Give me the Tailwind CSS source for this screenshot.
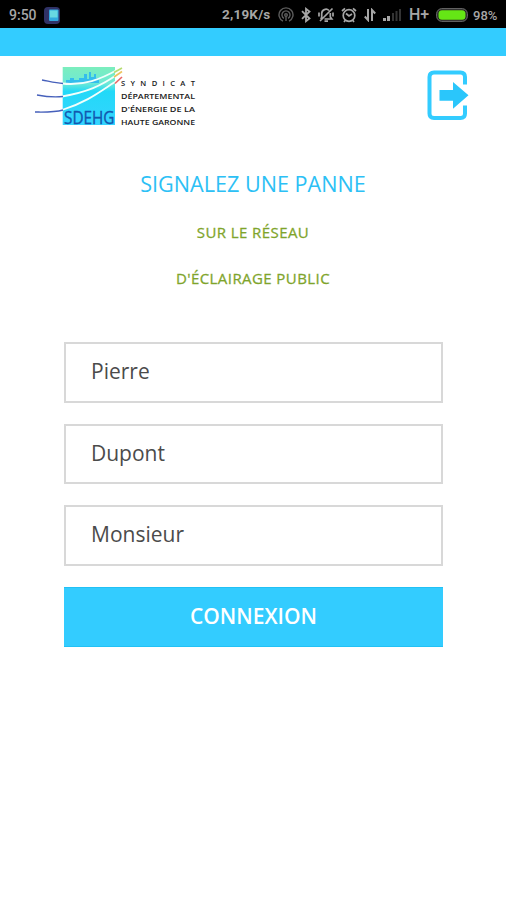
<!DOCTYPE html>
<html lang="fr">
<head>
<meta charset="utf-8">
<title>SDEHG - Signalez une panne</title>
<script src="https://cdn.jsdelivr.net/npm/@tailwindcss/browser@4"></script>
</head>
<body class="w-[506px] h-[900px] overflow-hidden bg-white font-['Open_Sans','Noto_Sans',sans-serif]">
<div class="h-7 bg-black flex items-center pl-[9px] pt-[2px] font-[Roboto,sans-serif] font-medium text-[#a6a6a6] leading-none">
  <span class="w-[35px] text-[14px]">9:50</span>
  <svg class="w-4 h-[17px]" viewBox="0 0 16 17"><rect width="16" height="17" rx="4" fill="#303266"/><rect x="5" y="2.500" width="9.500" height="11.500" rx="1" fill="#32a9df"/><rect x="6" y="3.500" width="7.500" height="7" fill="#68d8e2"/></svg>
  <span class="ml-[162px] w-[56px] text-[13.5px] font-bold tracking-[0.2px] whitespace-nowrap">2,19K/s</span>
  <svg class="w-4 h-4" viewBox="0 0 16 16" fill="none" stroke="#5c5c5c" stroke-width="1.4"><path d="M5 14.2A7 7 0 1 1 11 14.2M6 11.3A4 4 0 1 1 10 11.3"/><circle cx="8" cy="8" r="1.3"/><path d="M8 9v5"/></svg>
  <svg class="ml-[7px] w-[10px] h-4" viewBox="0 0 10 16" fill="none" stroke="#a6a6a6" stroke-width="1.8"><path d="M1 4.2 8.5 11.5 5 14.2V1.8L8.5 4.5 1 11.8"/></svg>
  <svg class="ml-[7px] w-4 h-4" viewBox="0 0 16 16" fill="none" stroke="#a6a6a6" stroke-width="1.7"><path d="M3.700 10.500 2.800 12M3.700 10.500V6.500a4.300 4.300 0 0 1 7.300-3M12.300 6v4l1.500 2H6.500M6.500 14.200h3.500M2 14 14.500 1.500M1 9.500V5.500M15 5.500v4"/></svg>
  <svg class="ml-[7px] w-4 h-4" viewBox="0 0 16 16" fill="none" stroke="#a6a6a6" stroke-width="1.7"><circle cx="8" cy="8.5" r="5.8"/><path d="M5 6.500 8 9l3-2M1 4l3-2.600M15 4l-3-2.600M3 15l1.500-2M13 15l-1.500-2"/></svg>
  <svg class="ml-[7px] w-3 h-[14px]" viewBox="0 0 12 14" fill="none" stroke="#a6a6a6" stroke-width="2"><path d="M4 1v11L.8 8.500M8 13V2l3.200 3.500"/></svg>
  <svg class="ml-[7px] w-5 h-[14px]" viewBox="0 0 20 14"><path d="M0 10h3v3H0zM4 8h3v5H4z" fill="#a6a6a6"/><path d="M9 5h2v8H9zM12.500 3h2v10h-2zM16 1h2v12h-2z" fill="#343434"/></svg>
  <span class="ml-[6px] w-[22px] text-[16px] whitespace-nowrap">H+</span>
  <svg class="ml-[5px] w-8 h-[14px]" viewBox="0 0 32 14"><rect x=".7" y=".7" width="30.600" height="12.600" rx="5" fill="#222" stroke="#777"/><rect x="2.500" y="2.300" width="27" height="9.400" rx="3.500" fill="#65e615"/></svg>
  <span class="ml-[5px] text-[13px]">98%</span>
</div>
<div class="h-7 bg-[#33ccff]"></div>
<header class="h-[84px] pl-[30px] pr-[34px] pt-[4px] flex justify-between">
  <svg class="w-[170px] h-[70px]" viewBox="30 60 170 70">
    <defs><linearGradient id="sky" x1="0" x2="0" y1="0" y2="1"><stop offset="0" stop-color="#7ceebd"/><stop offset=".28" stop-color="#6ee9d5"/><stop offset=".42" stop-color="#22d9f8"/><stop offset="1" stop-color="#35d4ff"/></linearGradient></defs>
    <rect x="62.700" y="67" width="52.300" height="58" fill="url(#sky)"/>
    <path d="M66 83v-3h4v-2h4v2h5v-2h5v-4h3v5h2v-7h2v5h3v-3h2v4h3v5z" fill="#34bdec"/>
    <g fill="none" stroke="#f2fffb" stroke-width="1.800"><path d="M62 83.500C84 86 101 79 117 70"/><path d="M62 96.500C87 92 101 86 118 74"/><path d="M62 110C88 102 102 90 118 80"/></g>
    <g fill="none" stroke="#4660bb" stroke-width="1.300"><path d="M42 80c6 1 13 3 21 3.500M37 95c8 1.500 17 2.500 26 1.500M35 112c9 0 19 .5 28-2"/></g>
    <g fill="none" stroke-width="1.600"><path d="M114 72.500 122 68" stroke="#b6dc71"/><path d="M114 77 122 71.500" stroke="#edc35d"/><path d="M115 83.500 122 77" stroke="#e96565"/></g>
    <text x="64" y="123.800" textLength="50.500" lengthAdjust="spacingAndGlyphs" font-family="Open Sans,sans-serif" font-size="17.500" fill="#1257ae" stroke="#1257ae" stroke-width=".35">SDEHG</text>
    <g font-family="Open Sans,sans-serif" font-weight="600" font-size="7.600" fill="#202020"><text x="121" y="86" textLength="74">SYNDICAT</text><text x="121" y="99" textLength="74" lengthAdjust="spacingAndGlyphs">DÉPARTEMENTAL</text><text x="121" y="112" textLength="74" lengthAdjust="spacingAndGlyphs">D'ÉNERGIE DE LA</text><text x="121" y="125" textLength="74" lengthAdjust="spacingAndGlyphs">HAUTE GARONNE</text></g>
  </svg>
  <svg class="w-[46px] h-[64px]" viewBox="426 60 46 64"><path d="M465 84.500V77q0-4.500-4.500-4.500h-26.500q-4.500 0-4.500 4.500v36.500q0 4.500 4.500 4.500h26.500q4.500 0 4.500-4.500v-8" fill="none" stroke="#33ccff" stroke-width="4"/><path d="M439.500 90h13.500v-8l15.500 13.300L453 108.800v-8h-13.500z" fill="#2ac6fb"/></svg>
</header>
<main class="flex flex-col items-center text-center">
  <h1 class="mt-[28px] h-8 leading-8 text-[21.600px] text-[#2cc0f5] whitespace-nowrap">SIGNALEZ UNE PANNE</h1>
  <p class="mt-[20px] h-6 leading-6 text-[15px] tracking-[0.42px] [-webkit-text-stroke:0.3px_#86a93a] text-[#7da326] whitespace-nowrap">SUR LE RÉSEAU</p>
  <p class="mt-[22px] h-6 leading-6 text-[15px] tracking-[0.42px] [-webkit-text-stroke:0.3px_#86a93a] text-[#7da326] whitespace-nowrap">D'ÉCLAIRAGE PUBLIC</p>
  <form class="mt-[52px] w-[379px] ml-px flex flex-col gap-[21px]">
    <input class="h-[61px] border-2 border-[#d8d8d8] px-[25px] pb-1 text-[21px] text-[#4b4b4b]" value="Pierre">
    <input class="h-[60px] border-2 border-[#d8d8d8] px-[25px] pb-[3px] text-[21px] text-[#4b4b4b]" value="Dupont">
    <input class="h-[61px] border-2 border-[#d8d8d8] px-[25px] pb-1 text-[21px] text-[#4b4b4b]" value="Monsieur">
    <button type="button" class="h-[60px] bg-[#33ccff] border-y border-[#22c1f5] pb-px text-[21px] font-semibold text-white">CONNEXION</button>
  </form>
</main>
</body>
</html>
